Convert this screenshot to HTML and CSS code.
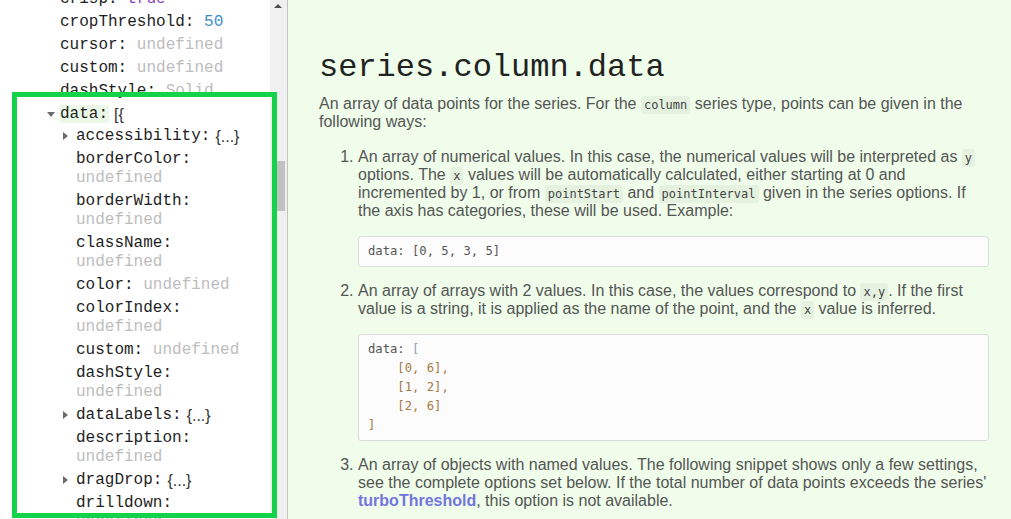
FILE: index.html
```html
<!DOCTYPE html>
<html>
<head>
<meta charset="utf-8">
<link rel="stylesheet" href="styles.css">
</head>
<body>
<div class="page">
  <aside class="sidebar">
    <div class="tree">
      <ul class="level0">
        <li><span class="key">crisp:</span> <span class="val bool">true</span></li>
        <li><span class="key">cropThreshold:</span> <span class="val num">50</span></li>
        <li><span class="key">cursor:</span> <span class="val undef">undefined</span></li>
        <li><span class="key">custom:</span> <span class="val undef">undefined</span></li>
        <li><span class="key">dashStyle:</span> <span class="val undef">Solid</span></li>
        <li class="open"><span class="arrow down"></span><span class="key current">data:</span><span class="brace">[{</span>
          <ul class="level1">
            <li><span class="arrow right"></span><span class="key">accessibility:</span><span class="brace">{...}</span></li>
            <li><span class="key">borderColor:</span> <span class="val undef">undefined</span></li>
            <li><span class="key">borderWidth:</span> <span class="val undef">undefined</span></li>
            <li><span class="key">className:</span> <span class="val undef">undefined</span></li>
            <li><span class="key">color:</span> <span class="val undef">undefined</span></li>
            <li><span class="key">colorIndex:</span> <span class="val undef">undefined</span></li>
            <li><span class="key">custom:</span> <span class="val undef">undefined</span></li>
            <li><span class="key">dashStyle:</span> <span class="val undef">undefined</span></li>
            <li><span class="arrow right"></span><span class="key">dataLabels:</span><span class="brace">{...}</span></li>
            <li><span class="key">description:</span> <span class="val undef">undefined</span></li>
            <li><span class="arrow right"></span><span class="key">dragDrop:</span><span class="brace">{...}</span></li>
            <li><span class="key">drilldown:</span> <span class="val undef">undefined</span></li>
          </ul>
        </li>
      </ul>
    </div>
    <div class="scrollbar">
      <span class="scroll-up"></span>
      <span class="scroll-thumb"></span>
    </div>
    <div class="highlight-box"></div>
  </aside>
  <main class="content">
    <h1 class="title">series.column.data</h1>
    <p>An array of data points for the series. For the <code>column</code> series type, points can be given in the following ways:</p>
    <ol class="ways">
      <li>
        <p>An array of numerical values. In this case, the numerical values will be interpreted as <code>y</code> options. The <code>x</code> values will be automatically calculated, either starting at 0 and incremented by 1, or from <code>pointStart</code> and <code>pointInterval</code> given in the series options. If the axis has categories, these will be used. Example:</p>
        <pre class="codeblock"><span class="c-key">data:</span> [0, 5, 3, 5]</pre>
      </li>
      <li>
        <p>An array of arrays with 2 values. In this case, the values correspond to <code>x,y</code>. If the first value is a string, it is applied as the name of the point, and the <code>x</code> value is inferred.</p>
        <pre class="codeblock"><span class="c-key">data:</span> <span class="c-br">[</span>
    <span class="c-num">[0, 6],</span>
    <span class="c-num">[1, 2],</span>
    <span class="c-num">[2, 6]</span>
<span class="c-num">]</span></pre>
      </li>
      <li>
        <p>An array of objects with named values. The following snippet shows only a few settings, see the complete options set below. If the total number of data points exceeds the series' <a class="link" href="#">turboThreshold</a>, this option is not available.</p>
      </li>
    </ol>
  </main>
</div>
</body>
</html>
```

FILE: styles.css
```css
html, body {
  margin: 0;
  padding: 0;
  height: 100%;
  overflow: hidden;
}

body {
  font-family: "Liberation Sans", Arial, sans-serif;
  background: #effdea;
}

.page {
  display: flex;
  height: 519px;
}

.sidebar {
  position: relative;
  display: flex;
  flex: 0 0 287px;
  background: #ffffff;
  border-right: 1px solid #c4c4c4;
  overflow: hidden;
}

.tree {
  flex: 0 0 270px;
  overflow: hidden;
  box-sizing: border-box;
}

.tree ul {
  list-style: none;
  margin: 0;
  padding: 0;
}

.level0 {
  margin-top: -10px !important;
  padding-left: 60px !important;
  padding-right: 8px !important;
}

.level1 {
  padding-left: 16px !important;
  margin-top: 3px !important;
}

.tree li {
  position: relative;
  font-family: "Liberation Mono", "Courier New", monospace;
  font-size: 16px;
  line-height: 19px;
  margin-bottom: 4px;
  color: #1e1e1e;
}

.key {
  color: #1e1e1e;
}

.key.current {
  background: #edf9e8;
  padding: 0 1px 0 0;
}

.val.undef {
  color: #bdbdbd;
}

.val.num {
  color: #3d8fc2;
}

.val.bool {
  color: #8a3fc0;
}

.brace {
  display: inline-block;
  vertical-align: top;
  margin-left: 5px;
  font-family: "Liberation Sans", Arial, sans-serif;
  font-size: 16px;
  line-height: 19px;
  height: 19px;
  color: #333;
}

.arrow {
  position: absolute;
  width: 0;
  height: 0;
}

.arrow.right {
  left: -13px;
  top: 5px;
  border-top: 4.5px solid transparent;
  border-bottom: 4.5px solid transparent;
  border-left: 5px solid #6b6b6b;
}

.arrow.down {
  left: -13px;
  top: 7px;
  border-left: 4px solid transparent;
  border-right: 4px solid transparent;
  border-top: 5px solid #6b6b6b;
}

.scrollbar {
  position: relative;
  flex: 0 0 17px;
  background: #f0f0f0;
}

.scroll-up {
  position: absolute;
  left: 4px;
  top: 4px;
  width: 0;
  height: 0;
  border-left: 4px solid transparent;
  border-right: 4px solid transparent;
  border-bottom: 4px solid #505050;
}

.scroll-thumb {
  position: absolute;
  left: 7px;
  top: 161px;
  width: 8px;
  height: 50px;
  background: #c1c1c1;
}

.highlight-box {
  position: absolute;
  left: 12px;
  top: 92px;
  width: 265px;
  height: 426px;
  box-sizing: border-box;
  border: 5px solid #14d24a;
  pointer-events: none;
}

.content {
  flex: 1 1 auto;
  padding: 49px 22px 0 31px;
  color: #555555;
  font-size: 16px;
  line-height: 18px;
}

.title {
  margin: 0 0 8px 0;
  font-family: "Liberation Mono", "Courier New", monospace;
  font-weight: normal;
  font-size: 32px;
  line-height: 38px;
  color: #222222;
}

.content p {
  margin: 0 0 17px 0;
}

code {
  font-family: "DejaVu Sans Mono", Consolas, monospace;
  font-size: 12px;
  line-height: 12px;
  background: #e5f2e0;
  border-radius: 3px;
  padding: 2px 3px;
  color: #444;
}

.ways {
  margin: 0;
  padding-left: 39px;
}

.ways li {
  margin: 0;
}

.ways li p {
  margin: 0;
}

.codeblock {
  margin: 16px 0 15px 0;
  padding: 5px 9px;
  background: #fcfcfc;
  border: 1px solid #dcdcdc;
  border-radius: 3px;
  font-family: "DejaVu Sans Mono", Consolas, monospace;
  font-size: 12.2px;
  line-height: 19px;
  color: #555;
}

.c-key {
  color: #555;
}

.c-br {
  color: #8c9fb0;
}

.c-num {
  color: #a5793f;
}

.link {
  color: #7474e0;
  font-weight: bold;
  text-decoration: none;
}
```
